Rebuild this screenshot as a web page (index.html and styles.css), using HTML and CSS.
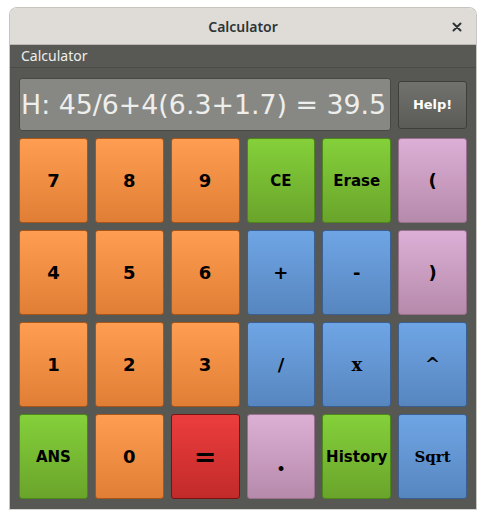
FILE: index.html
```html
<!DOCTYPE html>
<html>
<head>
<meta charset="utf-8">
<title>Calculator</title>
<link rel="stylesheet" href="styles.css">
</head>
<body>
<div class="window">
  <div class="titlebar">
    <span class="title">Calculator</span>
    <svg class="close" width="10" height="10" viewBox="0 0 10 10"><path d="M1.5 1.5L8.5 8.5M8.5 1.5L1.5 8.5" stroke="#2e3436" stroke-width="2" stroke-linecap="round"/></svg>
  </div>
  <div class="body">
    <div class="menubar">Calculator</div>
    <div class="main">
      <div class="toprow">
        <div class="display">H: 45/6+4(6.3+1.7) = 39.5</div>
        <button class="help">Help!</button>
      </div>
      <div class="keys">
        <button class="key orange num">7</button>
        <button class="key orange num">8</button>
        <button class="key orange num">9</button>
        <button class="key green">CE</button>
        <button class="key green">Erase</button>
        <button class="key pink num">(</button>

        <button class="key orange num">4</button>
        <button class="key orange num">5</button>
        <button class="key orange num">6</button>
        <button class="key blue num">+</button>
        <button class="key blue num">-</button>
        <button class="key pink num">)</button>

        <button class="key orange num">1</button>
        <button class="key orange num">2</button>
        <button class="key orange num">3</button>
        <button class="key blue num">/</button>
        <button class="key blue serif">x</button>
        <button class="key blue serif caret">^</button>

        <button class="key green">ANS</button>
        <button class="key orange num">0</button>
        <button class="key red num eq">=</button>
        <button class="key pink dot">.</button>
        <button class="key green">History</button>
        <button class="key blue serif sqrt">Sqrt</button>
      </div>
    </div>
  </div>
</div>
</body>
</html>
```
FILE: styles.css
```css
html, body {
  margin: 0;
  padding: 0;
  background: #ffffff;
}
.window {
  margin: 7px 0 0 9px;
  width: 466px;
  border: 1px solid #c8c5c1;
  border-bottom-color: #d8d6d3;
  border-radius: 8px 8px 0 0;
  overflow: hidden;
}
.titlebar {
  height: 36px;
  background: #dfdcd8;
  border-bottom: 1px solid #bdb8b2;
  display: flex;
  align-items: center;
  justify-content: center;
  position: relative;
}
.title {
  font-family: "Noto Sans", sans-serif;
  font-weight: 600;
  font-size: 14px;
  color: #2e3436;
}
.close {
  position: absolute;
  right: 14px;
  top: 14px;
}
.body {
  background: #575853;
}
.menubar {
  height: 22px;
  line-height: 22px;
  padding-left: 11px;
  font-family: "Noto Sans", sans-serif;
  font-size: 14px;
  color: #eeeeec;
  border-bottom: 1px solid #4b4c48;
  background: #585954;
}
.main {
  padding: 10px 9px 10px 9px;
}
.toprow {
  display: flex;
  align-items: center;
  gap: 7px;
}
.display {
  width: 370px;
  height: 51px;
  border: 1px solid #484945;
  border-radius: 3px;
  background: #878883;
  color: #eeeeec;
  font-family: "DejaVu Sans", sans-serif;
  font-size: 26.8px;
  line-height: 51px;
  padding-left: 1px;
  white-space: nowrap;
  overflow: hidden;
  box-sizing: content-box;
}
.help {
  width: 69px;
  height: 48px;
  margin: 0;
  padding: 0;
  border: 1px solid #3e3f3b;
  border-radius: 3px;
  background: linear-gradient(#71726d, #5b5c58);
  color: #ffffff;
  font-family: "DejaVu Sans", sans-serif;
  font-weight: 700;
  font-size: 13px;
}
.keys {
  margin-top: 7px;
  display: grid;
  grid-template-columns: repeat(6, 1fr);
  grid-template-rows: repeat(4, 85px);
  gap: 7px;
}
.key {
  margin: 0;
  padding: 0;
  border-radius: 3px;
  border: 1px solid;
  font-family: "DejaVu Sans", sans-serif;
  font-weight: 700;
  font-size: 15px;
  color: #000;
}
.key.num {
  font-size: 18px;
}
.key.eq {
  font-size: 27px;
}
.key.dot {
  font-family: "DejaVu Serif", serif;
  font-size: 26px;
  padding-top: 10px;
}
.key.serif {
  font-family: "DejaVu Serif", serif;
  font-size: 18px;
}
.key.sqrt {
  font-size: 15px;
}
.orange {
  background: linear-gradient(#ff9e52, #e07e35);
  border-color: #a9561a;
}
.green {
  background: linear-gradient(#84d03a, #6aa42b);
  border-color: #4b8719;
}
.pink {
  background: linear-gradient(#dcafd6, #b68aab);
  border-color: #98708e;
}
.blue {
  background: linear-gradient(#6fa5e5, #5786bf);
  border-color: #3a5f92;
}
.red {
  background: linear-gradient(#ec3d3d, #c22a2a);
  border-color: #7a1212;
}
```
